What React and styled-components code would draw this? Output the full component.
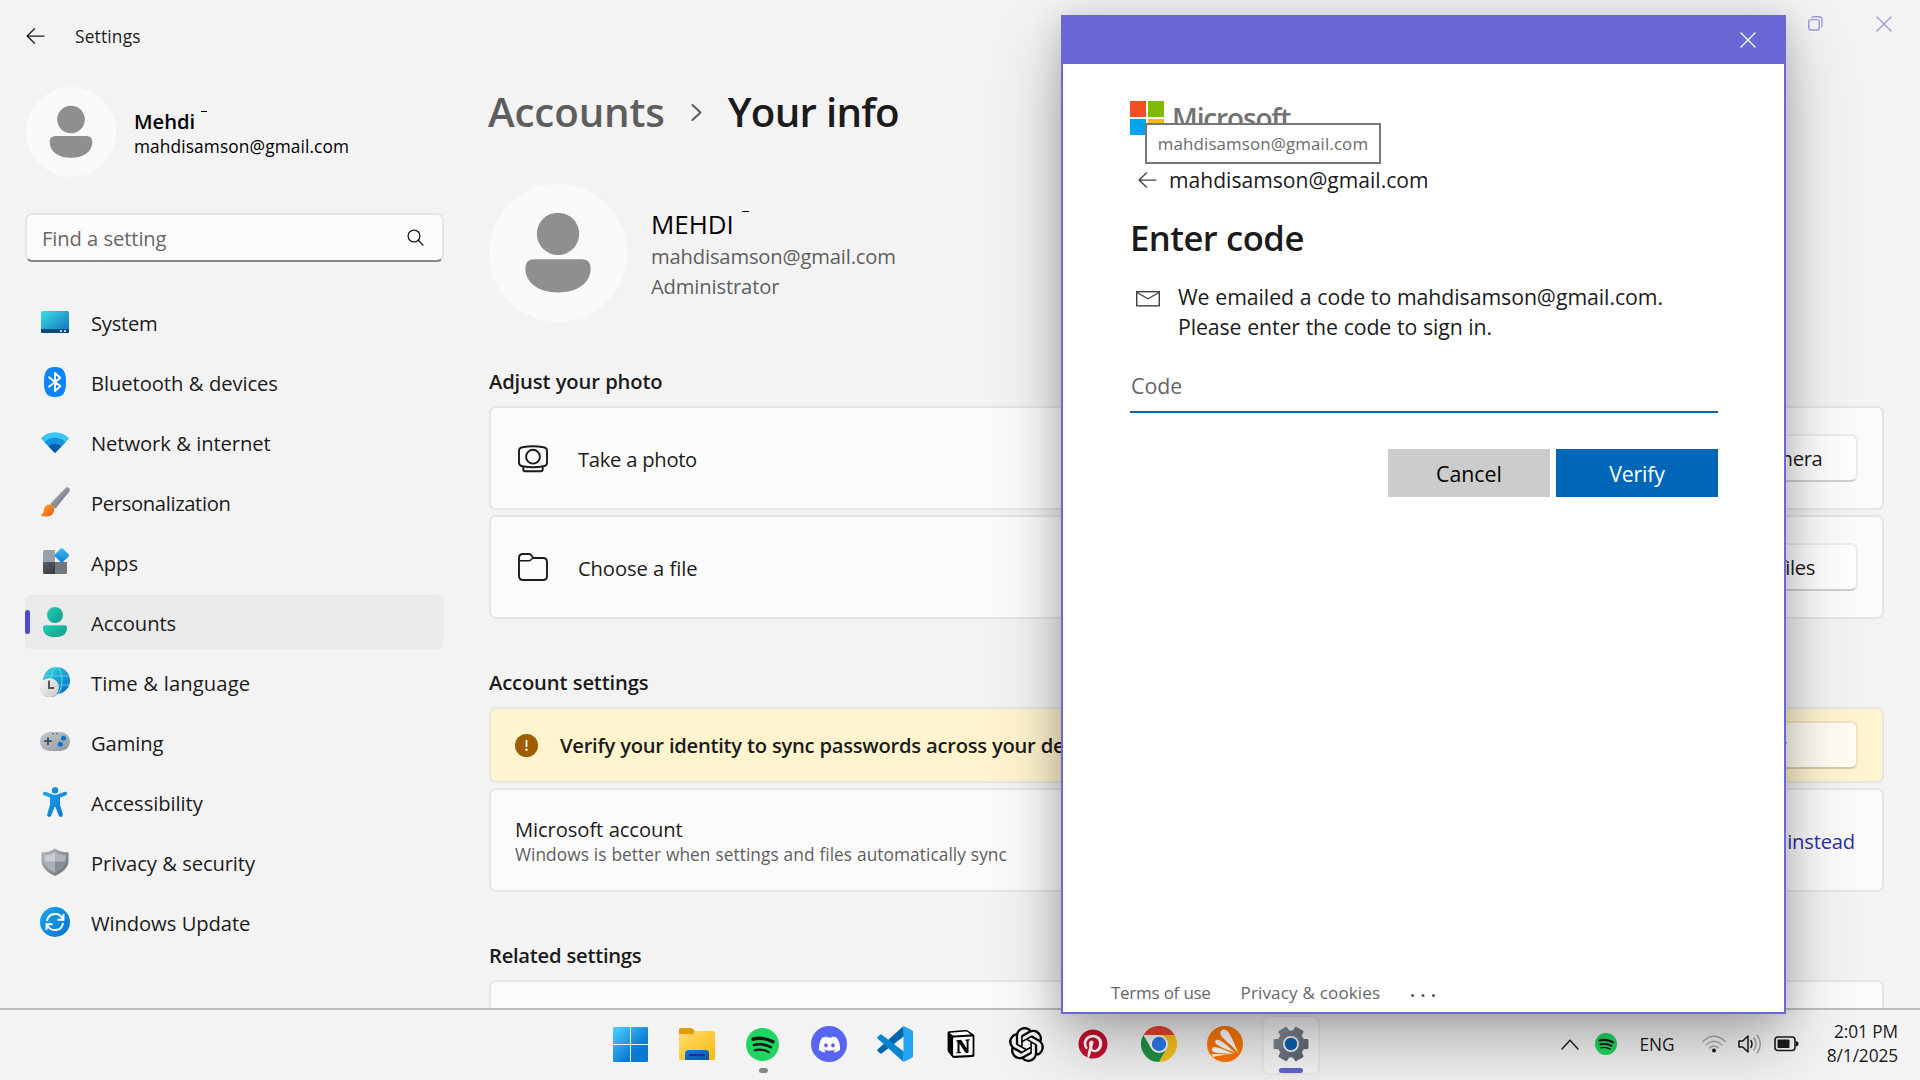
import React from "react";
import styled, { createGlobalStyle } from "styled-components";
import { FaDiscord, FaPinterest } from "react-icons/fa";
import { SiNotion, SiOpenai } from "react-icons/si";

const GlobalStyle = createGlobalStyle`
  * { box-sizing: border-box; }
  html, body { margin: 0; padding: 0; background: #f3f3f3; }
  body {
    width: 1920px;
    height: 1080px;
    overflow: hidden;
    font-family: "Open Sans", "Noto Sans", sans-serif;
    color: #1b1b1b;
    word-spacing: 0.02em;
  }
  button, input { font: inherit; color: inherit; word-spacing: inherit; }
  svg { display: block; flex: none; }
`;

const Text = styled.span`
  font-size: ${(p) => p.$size || 20.2}px;
  font-weight: ${(p) => p.$weight || 400};
  color: ${(p) => p.$color || "#1b1b1b"};
  line-height: ${(p) => p.$line || 30}px;
  letter-spacing: ${(p) => p.$track || 0}px;
  padding-top: ${(p) => p.$drop || 0}px;
  white-space: nowrap;
`;

const Desktop = styled.div`
  position: relative;
  width: 1920px;
  height: 1080px;
  overflow: hidden;
  display: flex;
  flex-direction: column;
`;

/* ---------- Settings window ---------- */

const Window = styled.div`
  height: 1010px;
  display: flex;
  flex-direction: column;
  overflow: hidden;
  background: #f3f3f3;
  border-bottom: 2px solid #bebebe;
`;

const TitleBar = styled.header`
  height: 72px;
  flex: none;
  display: flex;
  justify-content: space-between;
  padding-left: 26px;
`;

const TitleLeft = styled.div`
  display: flex;
  align-items: center;
  gap: 30px;
`;

const CaptionButtons = styled.div`
  display: flex;
  align-items: center;
  height: 47px;
  gap: 53px;
  padding-right: 28px;
`;

const Body = styled.div`
  flex: 1;
  min-height: 0;
  display: flex;
`;

const Sidebar = styled.aside`
  width: 444px;
  flex: none;
  padding: 15px 0 0 25px;
  display: flex;
  flex-direction: column;
`;

const Profile = styled.div`
  height: 90px;
  display: flex;
  align-items: center;
  gap: 18px;
  padding-left: 1px;
`;

const Stack = styled.div`
  display: flex;
  flex-direction: column;
  padding-top: ${(p) => p.$top || 0}px;
`;

const NameLine = styled.div`
  display: flex;
  gap: ${(p) => p.$gap}px;
`;

const Macron = styled.span`
  width: ${(p) => p.$w}px;
  height: 1px;
  margin-top: ${(p) => p.$top}px;
  background: #000;
`;

const Search = styled.label`
  margin-top: 36px;
  height: 49px;
  width: 419px;
  padding: 0 18px 0 15px;
  display: flex;
  align-items: center;
  justify-content: space-between;
  background: #fbfbfb;
  border: 2px solid #e5e5e5;
  border-bottom-color: #868686;
  border-radius: 7px;
`;

const Nav = styled.nav`
  margin-top: 33px;
  display: flex;
  flex-direction: column;
  gap: 6px;
`;

const NavItem = styled.a`
  height: 54px;
  width: 419px;
  display: flex;
  align-items: center;
  border-radius: 6px;
  background: ${(p) => (p.$active ? "#eaeaea" : "transparent")};
`;

const NavMark = styled.span`
  width: 5px;
  height: 24px;
  margin-right: 9px;
  border-radius: 3px;
  background: ${(p) => (p.$active ? "#4f4bcf" : "transparent")};
`;

const NavIcon = styled.span`
  width: 32px;
  height: 32px;
  margin-right: 20px;
  display: flex;
  align-items: center;
  justify-content: center;
`;

const Main = styled.main`
  margin-left: 45px;
  width: 1395px;
  padding-top: 12px;
  display: flex;
  flex-direction: column;
`;

const Breadcrumb = styled.h1`
  margin: 0 0 0 -1px;
  height: 56px;
  display: flex;
  align-items: center;
  font-weight: 600;
`;

const ChevronSlot = styled.span`
  width: 63px;
  display: flex;
  justify-content: center;
`;

const Account = styled.section`
  margin: 44px 0 0;
  height: 138px;
  display: flex;
  align-items: center;
  gap: 24px;
`;

const Section = styled.section`
  margin-top: ${(p) => p.$top || 48}px;
  display: flex;
  flex-direction: column;
`;

const Cards = styled.div`
  margin-top: 10px;
  display: flex;
  flex-direction: column;
  gap: 5px;
`;

const Card = styled.div`
  height: ${(p) => p.$h || 104}px;
  flex: none;
  display: flex;
  align-items: center;
  justify-content: space-between;
  padding: 0 24px 0 ${(p) => p.$pad || 27}px;
  background: ${(p) => (p.$warn ? "#fff4ce" : "#fbfbfb")};
  border: 2px solid #e5e5e5;
  border-radius: 7px;
`;

const CardLead = styled.div`
  display: flex;
  align-items: center;
  gap: ${(p) => p.$gap || 30}px;
  padding-top: ${(p) => p.$top || 0}px;
`;

const CardLink = styled.a`
  margin-right: 3px;
  display: flex;
`;

const CardButton = styled.button`
  width: 190px;
  height: 48px;
  padding: 0 5px 0 0;
  border: 2px solid ${(p) => (p.$warn ? "#efe5c2" : "#ececec")};
  border-bottom-color: ${(p) => (p.$warn ? "#d5cbaa" : "#d0d0d0")};
  border-radius: 7px;
  background: ${(p) => (p.$warn ? "#fffdf3" : "#fefefe")};
`;

const Alert = styled.span`
  width: 23px;
  height: 23px;
  border-radius: 50%;
  background: #9d5d00;
  display: flex;
  align-items: center;
  justify-content: center;
`;

/* ---------- Sign-in dialog ---------- */

const Dialog = styled.div`
  position: absolute;
  left: 1061px;
  top: 15px;
  width: 725px;
  height: 999px;
  display: flex;
  flex-direction: column;
  background: #fff;
  border: 2px solid #6a68d5;
  box-shadow: 0 30px 64px rgba(0, 0, 0, 0.27), 0 3px 30px rgba(0, 0, 0, 0.15);
`;

const DialogBar = styled.div`
  height: 47px;
  flex: none;
  display: flex;
  align-items: center;
  justify-content: flex-end;
  padding: 0 28px 2px 0;
  background: #6a68d5;
`;

const DialogBody = styled.div`
  flex: 1;
  padding: 37px 66px 0 67px;
  display: flex;
  flex-direction: column;
`;

const Brand = styled.div`
  position: relative;
  height: 34px;
  display: flex;
  align-items: center;
  gap: 8px;
`;

const Squares = styled.div`
  display: grid;
  grid-template-columns: 16px 16px;
  grid-template-rows: 16px 16px;
  gap: 2px;
`;

const Square = styled.span`
  background: ${(p) => p.$color};
`;

const Tooltip = styled.div`
  position: absolute;
  left: 15px;
  top: 22px;
  width: 236px;
  height: 41px;
  display: flex;
  align-items: center;
  justify-content: center;
  background: #fff;
  border: 2px solid #777;
`;

const Identity = styled.div`
  margin-top: 30px;
  height: 30px;
  padding-left: 8px;
  display: flex;
  align-items: center;
  gap: 12px;
`;

const Message = styled.div`
  margin-top: 22px;
  padding-left: 6px;
  display: flex;
  gap: 18px;
`;

const MailSlot = styled.span`
  padding-top: 9px;
`;

const CodeField = styled.label`
  margin-top: 18px;
  height: 53px;
  padding-left: 1px;
  display: flex;
  align-items: center;
  border-bottom: 2px solid #0067b8;
`;

const Actions = styled.div`
  margin-top: 36px;
  display: flex;
  justify-content: flex-end;
  gap: 6px;
`;

const Action = styled.button`
  width: 162px;
  height: 48px;
  padding: 2px 0 0;
  border: 0;
  background: ${(p) => (p.$primary ? "#0067b8" : "#cccccc")};
`;

const DialogFooter = styled.footer`
  height: 40px;
  flex: none;
  padding: 2px 0 0 48px;
  display: flex;
  align-items: center;
`;

const FooterItem = styled.a`
  margin-right: 30px;
  display: flex;
`;

/* ---------- Taskbar ---------- */

const Taskbar = styled.footer`
  height: 70px;
  display: flex;
  justify-content: flex-end;
  background: #f3f3f3;
`;

const Pinned = styled.div`
  display: flex;
  padding-top: 5px;
  margin-right: 237px;
`;

const Slot = styled.div`
  width: 66px;
  display: flex;
  justify-content: center;
`;

const Tile = styled.div`
  width: 58px;
  height: 60px;
  display: flex;
  flex-direction: column;
  align-items: center;
  border-radius: 7px;
  border: 2px solid ${(p) => (p.$active ? "rgba(0,0,0,0.05)" : "transparent")};
  background: ${(p) => (p.$active ? "rgba(255,255,255,0.4)" : "transparent")};
`;

const TileIcon = styled.div`
  height: 51px;
  display: flex;
  align-items: center;
  justify-content: center;
  padding-top: 3px;
  padding-right: ${(p) => (p.$odd ? 1 : 0)}px;
`;

const Running = styled.span`
  width: ${(p) => (p.$active ? 24 : 9)}px;
  height: 5px;
  flex: none;
  border-radius: 3px;
  background: ${(p) => (p.$active ? "#6562d0" : "#868686")};
`;

const Disc = styled.span`
  width: ${(p) => p.$size}px;
  height: ${(p) => p.$size}px;
  border-radius: ${(p) => p.$radius || "50%"};
  background: ${(p) => p.$bg};
  display: flex;
  align-items: center;
  justify-content: center;
`;

const Tray = styled.div`
  display: flex;
  align-items: center;
  width: 359px;
  padding: 0 22px 2px 0;
`;

const TrayItem = styled.span`
  width: ${(p) => p.$w}px;
  margin-right: ${(p) => p.$gap}px;
  display: flex;
  justify-content: center;
  flex: none;
`;

const Clock = styled.div`
  margin-left: auto;
  padding-bottom: 1px;
  display: flex;
  flex-direction: column;
  align-items: flex-end;
`;

/* ---------- Drawings ---------- */

const BackArrow = ({ color = "#1b1b1b", w = 19 }) => (
  <svg width={w} height="16" viewBox="0 0 19 16" fill="none" stroke={color} strokeWidth="1.250" strokeLinecap="round" strokeLinejoin="round">
    <path d="M18 8H1M8.600 .8 1 8l7.600 7.200" />
  </svg>
);

const Cross = ({ color, size = 16 }) => (
  <svg width={size} height={size} viewBox="0 0 16 16" stroke={color} strokeWidth="1.300" strokeLinecap="round">
    <path d="M1 1l14 14M15 1 1 15" />
  </svg>
);

const Restore = () => (
  <svg width="15" height="15" viewBox="0 0 15 15" fill="none" stroke="#9a98dc" strokeWidth="1.400">
    <rect x=".8" y="3.600" width="10.400" height="10.400" rx="2" />
    <path d="M3.800 1.800Q4.400.8 6 .8h4.600q3.400 0 3.400 3.400v4.600q0 1.600-1 2.400" />
  </svg>
);

const Person = ({ size }) => (
  <svg width={size} height={size} viewBox="0 0 90 90">
    <circle cx="45" cy="45" r="45" fill="#fafafa" />
    <circle cx="45" cy="32.500" r="13.800" fill="#8f8f8f" />
    <path d="M29.500 49h31q5.800 0 5.800 6c0 9.500-8.500 15.800-21.300 15.800S23.700 64.500 23.700 55q0-6 5.800-6z" fill="#8f8f8f" />
  </svg>
);

const SearchIcon = () => (
  <svg width="17" height="17" viewBox="0 0 17 17" fill="none" stroke="#1b1b1b" strokeWidth="1.300" strokeLinecap="round">
    <circle cx="7" cy="7" r="5.900" />
    <path d="M11.300 11.300 16 16" />
  </svg>
);

const Gradient = ({ id, from, to }) => (
  <linearGradient id={id} x1="0" y1="0" x2="1" y2="1">
    <stop offset="0" stopColor={from} />
    <stop offset="1" stopColor={to} />
  </linearGradient>
);

const Icon30 = ({ children }) => (
  <svg width="30" height="30" viewBox="0 0 30 30">{children}</svg>
);

const navIcons = {
  system: (
    <Icon30>
      <defs><Gradient id="sy" from="#3ce0e6" to="#0f6cbd" /></defs>
      <rect x="1" y="4" width="28" height="22" rx="1.500" fill="url(#sy)" />
      <path d="M1 22h28v2.500q0 1.500-1.500 1.500h-25Q1 26 1 24.500z" fill="#0b4a78" />
      <path d="M20 23h2v2h-2zM24 23h2v2h-2z" fill="#b4d6ea" />
    </Icon30>
  ),
  bluetooth: (
    <Icon30>
      <path d="M15 0C23 0 26 4 26 15s-3 15-11 15S4 26 4 15 7 0 15 0z" fill="#0a84ff" />
      <path d="M9 10.300 20.300 19.300 15 24V6l5.300 4.700L9 19.700" fill="none" stroke="#fff" strokeWidth="1.900" strokeLinejoin="round" strokeLinecap="round" />
    </Icon30>
  ),
  network: (
    <Icon30>
      <path d="M.8 11.500C8.500 3.200 21.500 3.200 29.200 11.500L15 26z" fill="#38c7f4" />
      <path d="M4.500 15.200C10 9.300 20 9.300 25.500 15.200L15 26z" fill="#1491df" />
      <path d="M8.700 19.400C12 15.700 18 15.700 21.300 19.400L15 26z" fill="#0e5aa7" />
    </Icon30>
  ),
  brush: (
    <Icon30>
      <defs>
        <Gradient id="bh" from="#b9bfc5" to="#5b636b" />
        <Gradient id="bt" from="#fbb12b" to="#e8541c" />
      </defs>
      <path d="M25.500 1c2-1.700 4.800-.3 4.200 2.300L29 5 15.500 21.500 10 17z" fill="url(#bh)" />
      <path d="M6 18.800c3-2.500 7.500-1 8.200 2.700.7 4.500-3 8-7.200 8-2.800 0-5-.4-6.500-1.500 4-1 2.500-7 5.500-9.200z" fill="url(#bt)" />
    </Icon30>
  ),
  apps: (
    <Icon30>
      <defs><Gradient id="ap" from="#3cc4f5" to="#0b7cd8" /><Gradient id="aq" from="#5a6066" to="#35393d" /></defs>
      <path d="M3 4.500Q3 3 4.500 3H15v12H3z" fill="#98a1aa" />
      <path d="M3 15h12v12H4.500Q3 27 3 25.500z" fill="url(#aq)" />
      <path d="M15 15h12v10.500q0 1.500-1.500 1.500H15z" fill="#707982" />
      <rect x="16.200" y="2.700" width="11.200" height="11.200" rx="1.600" transform="rotate(45 21.800 8.300)" fill="url(#ap)" />
    </Icon30>
  ),
  accounts: (
    <Icon30>
      <defs><Gradient id="ac" from="#22cdb6" to="#129b86" /></defs>
      <circle cx="15" cy="8" r="8" fill="url(#ac)" />
      <path d="M5.500 18.300h19q2.500 0 2.500 2.700c0 6-5 9.200-12 9.200S3 27 3 21q0-2.700 2.500-2.700z" fill="url(#ac)" />
    </Icon30>
  ),
  time: (
    <Icon30>
      <defs>
        <Gradient id="tm" from="#36dbe3" to="#0c64be" />
        <Gradient id="tc" from="#f7f7f7" to="#c9cacc" />
      </defs>
      <circle cx="16.500" cy="13.500" r="13.500" fill="url(#tm)" />
      <g fill="none" stroke="#5fe0f2" strokeWidth="1.200" opacity=".75">
        <path d="M4 9h25M4 18h25" />
        <ellipse cx="16.500" cy="13.500" rx="5.500" ry="13.200" />
      </g>
      <circle cx="10" cy="20.800" r="9.700" fill="#0b4f8a" opacity=".35" />
      <circle cx="9.500" cy="20.500" r="9.500" fill="url(#tc)" />
      <path d="M9 13.500v7.500h5.200" fill="none" stroke="#555" strokeWidth="1.900" />
    </Icon30>
  ),
  gaming: (
    <Icon30>
      <defs><Gradient id="gm" from="#c6cbd0" to="#8e969e" /></defs>
      <rect x="0" y="5" width="30" height="19" rx="9.500" fill="url(#gm)" />
      <path d="M8 10.500v7.500M4.200 14.200h7.600" stroke="#444b52" strokeWidth="1.800" />
      <circle cx="23.500" cy="11.300" r="2.500" fill="#0f73ce" />
      <circle cx="20.300" cy="17.300" r="2.500" fill="#0f73ce" />
      <circle cx="13" cy="6.800" r=".8" fill="#444" /><circle cx="17" cy="6.800" r=".8" fill="#444" />
    </Icon30>
  ),
  access: (
    <Icon30>
      <defs><Gradient id="as" from="#1ba5ee" to="#0a72cf" /></defs>
      <g fill="url(#as)">
        <circle cx="15" cy="3.200" r="3.200" />
        <path d="M5.300 4.700 12 7.300q3 1 6 0l6.700-2.600c2.400-.6 3.300 2.600 1.200 3.500L20 10.500v7.300l2.800 9.500c.4 2.700-3 3.600-4.100 1.300L15.500 20h-1l-3.200 8.600c-1.100 2.300-4.500 1.400-4.100-1.300L10 17.800v-7.300L4.100 8.200C2 7.300 2.900 4.100 5.300 4.700z" />
      </g>
    </Icon30>
  ),
  privacy: (
    <Icon30>
      <defs><Gradient id="pv" from="#b4bac0" to="#646c74" /></defs>
      <path d="M15 1.500c4 3 8 3.800 13.500 3.800v9C28.500 20 23 25.500 15 29 7 25.500 1.500 20 1.500 14.300v-9C7 5.300 11 4.500 15 1.500z" fill="url(#pv)" />
      <path d="M15 5c3 2 6 3 10.500 3.200v6.600H15z" fill="#b0b6bc" />
      <path d="M15 5c-3 2-6 3-10.500 3.200v6.600H15z" fill="#c9cdd2" />
      <path d="M4.500 14.800C5 19 9.500 23.300 15 26V14.800z" fill="#aab0b7" />
      <path d="M25.500 14.800C25 19 20.500 23.300 15 26V14.800z" fill="#868e96" />
    </Icon30>
  ),
  update: (
    <Icon30>
      <defs><Gradient id="up" from="#1ba5ee" to="#0a72cf" /></defs>
      <circle cx="15" cy="15" r="15" fill="url(#up)" />
      <g fill="none" stroke="#fff" strokeWidth="1.900">
        <path d="M7 14.200C8 5.500 19.500 4.500 22.700 12M23.500 7v5.700h-6" />
        <path d="M23 15.800C22 24.500 10.500 25.500 7.300 18M6.500 23v-5.700h6" />
      </g>
    </Icon30>
  ),
};

const CameraIcon = () => (
  <svg width="30" height="28" viewBox="0 0 30 28" fill="none" stroke="#1b1b1b" strokeWidth="1.900">
    <path d="M4.500 2.200Q15 .4 25.500 2.200 29 2.800 29 5.500V18q0 2.700-3.500 3.300Q15 23.200 4.500 21.300 1 20.700 1 18V5.500Q1 2.800 4.500 2.200z" />
    <circle cx="15" cy="11.700" r="6.900" />
    <path d="M5.300 21.500v3q0 1.700 1.700 1.700h16q1.700 0 1.700-1.700v-3" />
  </svg>
);

const FolderIcon = () => (
  <svg width="30" height="28" viewBox="0 0 30 28" fill="none" stroke="#1b1b1b" strokeWidth="1.900" strokeLinejoin="round">
    <path d="M1 5q0-4 4-4h6q1.500 0 2.500 1.500l1.800 2.500H25q4 0 4 4v14q0 4-4 4H5q-4 0-4-4z" />
    <path d="M1 7.700h9.500q1.500 0 2.500-1L15 5" strokeWidth="1.500" />
  </svg>
);

const MailIcon = () => (
  <svg width="24" height="16" viewBox="0 0 24 16" fill="none" stroke="#404040" strokeWidth="1.400">
    <rect x=".7" y=".7" width="22.600" height="14.100" />
    <path d="M1 1.500 12 7.800 23 1.500" />
  </svg>
);

const SpotifyIcon = ({ size, green = "#1ed760" }) => (
  <svg width={size} height={size} viewBox="0 0 33 33" fill="none" stroke="#151515" strokeLinecap="round">
    <circle cx="16.500" cy="16.500" r="16.500" fill={green} stroke="none" />
    <path d="M7 11.200q10.500-2.800 20 2.600" strokeWidth="3.300" />
    <path d="M8 17q9-2.400 16.800 2.200" strokeWidth="2.700" />
    <path d="M8.700 22.300q7.500-2 14 1.800" strokeWidth="2.100" />
  </svg>
);

const gearPath = (() => {
  const pts = [];
  for (let i = 0; i < 6; i += 1) {
    const c = i * 60;
    [[-18, 12.6], [-13, 16.6], [13, 16.6], [18, 12.6]].forEach(([da, r]) => {
      const a = ((c + da) * Math.PI) / 180;
      pts.push(`${(18 + r * Math.cos(a)).toFixed(2)} ${(18 + r * Math.sin(a)).toFixed(2)}`);
    });
  }
  return `M${pts.join("L")}Z`;
})();

const apps = [
  {
    id: "start",
    odd: true,
    icon: (
      <svg width="35" height="35" viewBox="0 0 35 35">
        <defs><linearGradient id="wn" gradientUnits="userSpaceOnUse" x1="0" y1="0" x2="35" y2="35"><stop offset="0" stopColor="#4fd3ff" /><stop offset=".65" stopColor="#0a7bd6" /><stop offset="1" stopColor="#0a75d2" /></linearGradient></defs>
        <path d="M0 1.200Q0 0 1.200 0H17v17H0zM18 0h15.800Q35 0 35 1.200V17H18zM0 18h17v17H1.200Q0 35 0 33.800zM18 18h17v15.800q0 1.200-1.200 1.200H18z" fill="url(#wn)" />
      </svg>
    ),
  },
  {
    id: "files",
    icon: (
      <svg width="36" height="34" viewBox="0 0 36 34">
        <defs><Gradient id="fe" from="#ffdc6e" to="#fbb80f" /><Gradient id="fb" from="#0d7fd6" to="#0a55a3" /></defs>
        <path d="M0 2.500Q0 1 1.500 1h10.300q1.200 0 2 1L16 4.500 14 8H0z" fill="#e09a04" />
        <path d="M0 7h13q1 0 2-1l1.500-1.500q.8-.5 1.700-.5H34.500Q36 4 36 5.500v26q0 1.500-1.500 1.500h-33Q0 33 0 31.500z" fill="url(#fe)" />
        <path d="M6 33v-6.500q0-3.500 3.500-3.500h17q3.500 0 3.500 3.500V33z" fill="url(#fb)" />
        <path d="M10.500 28h14.500" stroke="#0a3f7c" strokeWidth="1.800" strokeLinecap="round" />
      </svg>
    ),
  },
  { id: "spotify", odd: true, icon: <SpotifyIcon size={33} />, running: true },
  { id: "discord", icon: <Disc $size={36} $bg="#5865f2"><FaDiscord size={23} color="#fff" /></Disc> },
  {
    id: "code",
    icon: (
      <svg width="36" height="36" viewBox="0 0 36 36">
        <path d="M26.500 0 .8 23.300q-1 1 0 2L3 27.300q.9.700 1.900 0L27 10.200z" fill="#0065a9" />
        <path d="M26.500 36 .8 12.700q-1-1 0-2L3 8.700q.9-.7 1.900 0L27 25.800z" fill="#0a86d1" />
        <path d="M26.500 0 34.700 3.900Q36 4.600 36 6v24q0 1.400-1.300 2.100L26.500 36z" fill="#24a3f1" />
      </svg>
    ),
  },
  { id: "notion", icon: <Disc $size={27} $bg="#fff" $radius="4px"><SiNotion size={28} color="#000" /></Disc> },
  { id: "openai", odd: true, icon: <SiOpenai size={35} color="#000" /> },
  { id: "pinterest", icon: <Disc $size={30} $bg="#fff"><FaPinterest size={30} color="#c8102e" /></Disc> },
  {
    id: "chrome",
    icon: (
      <svg width="36" height="36" viewBox="0 0 36 36">
        <path d="M2.400 9A18 18 0 0 1 33.600 9H18z" fill="#ea4335" />
        <path d="M33.600 9A18 18 0 0 1 18 36l8-13.500L18 9z" fill="#fcc31e" />
        <path d="M18 36A18 18 0 0 1 2.400 9l8 13.700L25.700 22.500z" fill="#229342" />
        <circle cx="18" cy="18" r="9" fill="#fff" />
        <circle cx="18" cy="18" r="7.200" fill="#2f7bf0" />
      </svg>
    ),
  },
  {
    id: "avast",
    icon: (
      <svg width="36" height="36" viewBox="0 0 36 36">
        <circle cx="18" cy="18" r="18" fill="#ff7800" />
        <g fill="#fff">
          <path d="M31.500 27.500C26 20 16.500 14 13.600 8.800 12 5 16.500 1.800 20 4.800 24 8.500 27 17 31.500 27.500z" />
          <path d="M29 27.300C21.500 24 12 21 8.700 17.500 7 15.200 9.500 12.600 12.500 14.300 17.500 17 22 21.500 29 27.300z" />
          <path d="M26.500 27.800C20 27.600 11 27.800 6.500 25.800 3.800 24.300 4.800 20.800 8 21 13.500 21.800 19 24.500 26.500 27.800z" />
          <path d="M24 28.500Q12 29 6.500 31L4.600 28.500q1.500 0 3-.4z" />
        </g>
      </svg>
    ),
  },
  {
    id: "settings",
    active: true,
    icon: (
      <svg width="36" height="36" viewBox="0 0 36 36">
        <defs><Gradient id="gr" from="#8b959e" to="#56606a" /></defs>
        <path d={gearPath} fill="url(#gr)" stroke="url(#gr)" strokeWidth="2.500" strokeLinejoin="round" />
        <circle cx="18" cy="18" r="8" fill="#f3f6f8" />
        <circle cx="18" cy="18" r="6.200" fill="#0c62b0" />
      </svg>
    ),
  },
];

const navItems = [
  ["system", "System", -0.25],
  ["bluetooth", "Bluetooth & devices", -0.07],
  ["network", "Network & internet", -0.1],
  ["brush", "Personalization", -0.35],
  ["apps", "Apps", 0],
  ["accounts", "Accounts", -0.1],
  ["time", "Time & language", 0.1],
  ["gaming", "Gaming", -0.12],
  ["access", "Accessibility", -0.08],
  ["privacy", "Privacy & security", -0.12],
  ["update", "Windows Update", -0.1],
];

const EMAIL = "mahdisamson@gmail.com";

function SettingsSidebar() {
  return (
    <Sidebar>
      <Profile>
        <Person size={90} />
        <Stack $top={3}>
          <NameLine $gap={6}>
            <Text $weight={600} $line={26} $size={20.2} $color="#000">Mehdi</Text>
            <Macron $w={6} $top={3} />
          </NameLine>
          <Text $size={17.3} $line={25} $track={0.12} $color="#000">{EMAIL}</Text>
        </Stack>
      </Profile>
      <Search>
        <Text $track={-0.14} $color="#676767">Find a setting</Text>
        <SearchIcon />
      </Search>
      <Nav>
        {navItems.map(([id, label, track]) => (
          <NavItem key={id} $active={id === "accounts"}>
            <NavMark $active={id === "accounts"} />
            <NavIcon>{navIcons[id]}</NavIcon>
            <Text $drop={2} $track={track}>{label}</Text>
          </NavItem>
        ))}
      </Nav>
    </Sidebar>
  );
}

function YourInfo() {
  return (
    <Main>
      <Breadcrumb>
        <Text $size={40.3} $weight={600} $line={56} $track={-0.15} $color="#5d5d5d">Accounts</Text>
        <ChevronSlot>
          <svg width="11" height="17" viewBox="0 0 11 17" fill="none" stroke="#5d5d5d" strokeWidth="2" strokeLinecap="round" strokeLinejoin="round">
            <path d="M1.500 1 9.500 8.500 1.500 16" />
          </svg>
        </ChevronSlot>
        <Text $size={40.3} $weight={600} $line={56} $track={-0.8}>Your info</Text>
      </Breadcrumb>
      <Account>
        <Person size={138} />
        <Stack $top={2}>
          <NameLine $gap={8}>
            <Text $size={25.9} $line={34} $color="#000">MEHDI</Text>
            <Macron $w={7} $top={4} />
          </NameLine>
          <Text $track={-0.17} $color="#5f5f5f">{EMAIL}</Text>
          <Text $track={-0.15} $color="#5f5f5f">Administrator</Text>
        </Stack>
      </Account>
      <Section $top={44}>
        <Text $weight={600} $track={-0.15}>Adjust your photo</Text>
        <Cards>
          <Card>
            <CardLead $top={2}><CameraIcon /><Text $track={-0.33}>Take a photo</Text></CardLead>
            <CardButton><Text $track={-0.35}>Open camera</Text></CardButton>
          </Card>
          <Card>
            <CardLead><FolderIcon /><Text $drop={2} $track={-0.12}>Choose a file</Text></CardLead>
            <CardButton><Text $track={-0.4}>Browse files</Text></CardButton>
          </Card>
        </Cards>
      </Section>
      <Section>
        <Text $weight={600} $track={-0.15}>Account settings</Text>
        <Cards>
          <Card $warn $h={76} $pad={24}>
            <CardLead $gap={22}>
              <Alert>
                <svg width="3" height="11" viewBox="0 0 3 11" fill="#fff"><path d="M.6 0h1.800v7H.6z" /><circle cx="1.500" cy="9.700" r="1.200" /></svg>
              </Alert>
              <Text $weight={600} $track={-0.29}>Verify your identity to sync passwords across your devices.</Text>
            </CardLead>
            <CardButton $warn><Text $track={-0.3}>Verify</Text></CardButton>
          </Card>
          <Card $pad={24}>
            <Stack $top={2}>
              <Text $line={26} $track={-0.1}>Microsoft account</Text>
              <Text $size={17.3} $line={25} $track={0.06} $color="#5f5f5f">Windows is better when settings and files automatically sync</Text>
            </Stack>
            <CardLink><Text $drop={1} $track={-0.2} $color="#302dac">Sign in with a local account instead</Text></CardLink>
          </Card>
        </Cards>
      </Section>
      <Section>
        <Text $weight={600} $track={-0.26}>Related settings</Text>
        <Cards><Card /></Cards>
      </Section>
    </Main>
  );
}

function SignInDialog() {
  return (
    <Dialog>
      <DialogBar><Cross color="#fff" /></DialogBar>
      <DialogBody>
        <Brand>
          <Squares>
            <Square $color="#f25022" /><Square $color="#7fba00" />
            <Square $color="#00a4ef" /><Square $color="#ffb900" />
          </Squares>
          <Text $size={28} $weight={600} $track={-1.15} $line={34} $color="#737373">Microsoft</Text>
          <Tooltip><Text $size={16.9} $track={0.12} $color="#6b6b6b">{EMAIL}</Text></Tooltip>
        </Brand>
        <Identity>
          <BackArrow color="#404040" />
          <Text $size={21.1}>{EMAIL}</Text>
        </Identity>
        <Stack $top={21}>
          <Text $size={34.6} $weight={600} $line={44} $track={-0.5}>Enter code</Text>
        </Stack>
        <Message>
          <MailSlot><MailIcon /></MailSlot>
          <Stack>
            <Text $size={21.3} $track={-0.07}>We emailed a code to {EMAIL}.</Text>
            <Text $size={21.3} $track={-0.11}>Please enter the code to sign in.</Text>
          </Stack>
        </Message>
        <CodeField><Text $size={21.3} $color="#666">Code</Text></CodeField>
        <Actions>
          <Action><Text $size={21.3} $color="#000">Cancel</Text></Action>
          <Action $primary><Text $size={21.3} $track={-0.15} $color="#fff">Verify</Text></Action>
        </Actions>
      </DialogBody>
      <DialogFooter>
        <FooterItem><Text $size={17} $track={-0.3} $color="#666">Terms of use</Text></FooterItem>
        <FooterItem><Text $size={17} $track={0.13} $color="#666">Privacy &amp; cookies</Text></FooterItem>
        <FooterItem>
          <svg width="27" height="9" viewBox="0 0 27 9" fill="#555"><circle cx="2.500" cy="6.500" r="1.500" /><circle cx="13" cy="6.500" r="1.500" /><circle cx="23.500" cy="6.500" r="1.500" /></svg>
        </FooterItem>
      </DialogFooter>
    </Dialog>
  );
}

function SystemTray() {
  return (
    <Tray>
      <TrayItem $w={18} $gap={16}>
        <svg width="18" height="11" viewBox="0 0 18 11" fill="none" stroke="#1b1b1b" strokeWidth="1.400" strokeLinecap="round"><path d="M1 10 9 1.300 17 10" /></svg>
      </TrayItem>
      <TrayItem $w={22} $gap={22}><SpotifyIcon size={22} /></TrayItem>
      <TrayItem $w={36} $gap={27}><Text $size={17.3} $drop={2}>ENG</Text></TrayItem>
      <TrayItem $w={24} $gap={12}>
        <svg width="24" height="18" viewBox="0 0 24 18" fill="none" stroke="#a9a9a9" strokeWidth="1.400" strokeLinecap="round">
          <path d="M1 6.500Q12-4 23 6.500M4.300 9.800q7.700-7 15.400 0M7.500 13q4.500-4 9 0" />
          <circle cx="12" cy="15.600" r="2" fill="#1b1b1b" stroke="none" />
        </svg>
      </TrayItem>
      <TrayItem $w={24} $gap={12}>
        <svg width="24" height="20" viewBox="0 0 24 20" fill="none" strokeWidth="1.500" strokeLinecap="round" strokeLinejoin="round">
          <path d="M1 7h3.700L10 2v16l-5.300-5H1z" stroke="#1b1b1b" />
          <path d="M13 6.500q2 3.500 0 7" stroke="#1b1b1b" />
          <path d="M16 4q4 6 0 12M19.300 1.300q6 8.700 0 17.400" stroke="#a9a9a9" />
        </svg>
      </TrayItem>
      <TrayItem $w={25} $gap={0}>
        <svg width="25" height="16" viewBox="0 0 25 16">
          <rect x="1" y="1" width="20" height="13.500" rx="3" fill="none" stroke="#1b1b1b" strokeWidth="1.600" />
          <rect x="3.500" y="3.500" width="12" height="8.500" rx="1" fill="#1b1b1b" />
          <path d="M22 5.300h.8q1.700.3 1.700 2.500t-1.700 2.500H22z" fill="#1b1b1b" />
        </svg>
      </TrayItem>
      <Clock>
        <Text $size={17.3} $line={24} $track={-0.15}>2:01 PM</Text>
        <Text $size={17.3} $line={24} $track={-0.1}>8/1/2025</Text>
      </Clock>
    </Tray>
  );
}

export default function App() {
  return (
    <>
      <GlobalStyle />
      <Desktop>
        <Window>
          <TitleBar>
            <TitleLeft><BackArrow /><Text $size={17.3} $drop={2} $track={0.2}>Settings</Text></TitleLeft>
            <CaptionButtons><Restore /><Cross color="#9a98dc" /></CaptionButtons>
          </TitleBar>
          <Body>
            <SettingsSidebar />
            <YourInfo />
          </Body>
        </Window>
        <Taskbar>
          <Pinned>
            {apps.map((app) => (
              <Slot key={app.id}>
                <Tile $active={app.active}>
                  <TileIcon $odd={app.odd}>{app.icon}</TileIcon>
                  {(app.running || app.active) && <Running $active={app.active} />}
                </Tile>
              </Slot>
            ))}
          </Pinned>
          <SystemTray />
        </Taskbar>
        <SignInDialog />
      </Desktop>
    </>
  );
}
